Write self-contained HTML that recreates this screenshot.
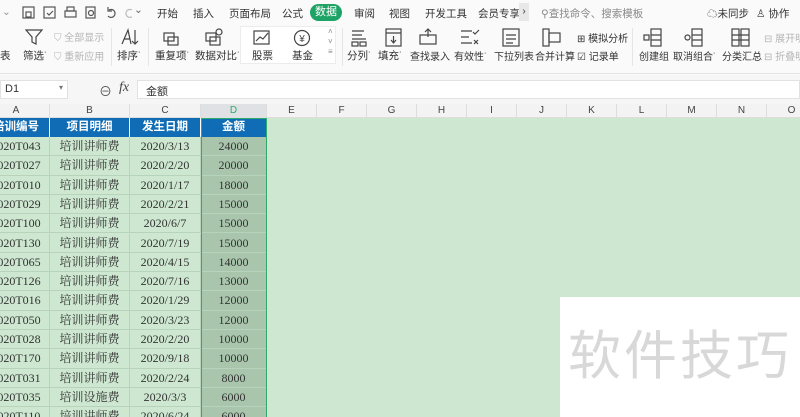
<!DOCTYPE html>
<html style="overflow:hidden;height:417px"><head><meta charset="utf-8"><style>
*{margin:0;padding:0;box-sizing:border-box}
html,body{width:800px;height:417px;overflow:hidden}
body{background:#fff;font-family:"Liberation Sans","Noto Sans CJK SC",sans-serif;color:#333}
#root{position:relative;width:800px;height:417px;overflow:hidden}
.a{position:absolute;white-space:nowrap}
.t{font-size:10.5px;color:#333}
.g{color:#b5b5b5}
.ic{position:absolute}
.ic svg{display:block}
.cell{position:absolute;font-size:12px;text-align:center;font-family:"Liberation Serif","Noto Serif CJK SC",serif;color:#333}
</style></head><body><div id="root">
<div class="a" style="left:0;top:0;width:800px;height:75px;background:#fafafa"></div>
<div class="a" style="left:0;top:73px;width:800px;height:1px;background:#e4e4e4"></div>
<div class="a t" style="left:2px;top:6px;color:#999">⌄</div>
<div class="ic" style="left:22px;top:6px"><svg width="110" height="14" fill="none" stroke="#555" stroke-width="1.2"><rect x="1" y="1" width="11" height="11"/><rect x="4" y="6" width="5" height="5"/><rect x="22" y="1" width="11" height="11"/><path d="M25 7l2 2 4-4"/><rect x="43" y="5" width="11" height="6"/><rect x="45" y="1" width="7" height="4"/><rect x="64" y="1" width="9" height="11"/><circle cx="69" cy="7" r="2.5"/><path d="M87 4a4 4 0 1 1-1 6M86 1v4h4"/><path stroke="#bbb" d="M110 4a4 4 0 1 0 1 6"/></svg></div>
<div class="a t" style="left:134px;top:4px;color:#666">⌄</div>
<div class="a t" style="left:157px;top:6px">开始</div>
<div class="a t" style="left:193px;top:6px">插入</div>
<div class="a t" style="left:229px;top:6px">页面布局</div>
<div class="a t" style="left:282px;top:6px">公式</div>
<div class="a" style="left:310px;top:4px;width:32px;height:17px;border-radius:9px;background:#1ea366;color:#fff;font-size:11px;text-align:center;line-height:17px">数据</div>
<div class="a t" style="left:354px;top:6px">审阅</div>
<div class="a t" style="left:389px;top:6px">视图</div>
<div class="a t" style="left:425px;top:6px">开发工具</div>
<div class="a t" style="left:478px;top:6px">会员专享</div>
<div class="a" style="left:519px;top:3px;width:10px;height:18px;background:#e8e8e8;font-size:10px;text-align:center;line-height:18px">›</div>
<div class="a t" style="left:541px;top:6px;color:#888">⚲查找命令、搜索模板</div>
<div class="a t" style="left:707px;top:6px">☁未同步</div>
<div class="a t" style="left:756px;top:6px">♙ 协作</div>
<div class="a t" style="left:0;top:48px">表</div>
<div class="ic" style="left:25px;top:28px"><svg width="18" height="18" fill="none" stroke="#444" stroke-width="1.2"><path d="M1 2h16l-6 7v7l-4-2V9z"/></svg></div>
<div class="a t" style="left:23px;top:48px">筛选˙</div>
<div class="a t g" style="left:54px;top:29px;font-size:10px">⛉ 全部显示</div>
<div class="a t g" style="left:54px;top:48px;font-size:10px">⛉ 重新应用</div>
<div class="a" style="left:111px;top:28px;width:1px;height:38px;background:#e5e5e5"></div>
<div class="ic" style="left:120px;top:28px"><svg width="20" height="18" fill="none" stroke="#444" stroke-width="1.2"><path d="M2 16L8 2l3 14M4 11h6M15 2v14M12 13l3 3 3-3"/></svg></div>
<div class="a t" style="left:117px;top:48px">排序˙</div>
<div class="a" style="left:148px;top:28px;width:1px;height:38px;background:#e5e5e5"></div>
<div class="ic" style="left:162px;top:28px"><svg width="20" height="18" fill="none" stroke="#444" stroke-width="1.2"><rect x="2" y="5" width="10" height="8"/><rect x="6" y="9" width="10" height="8"/></svg></div>
<div class="a t" style="left:155px;top:48px">重复项˙</div>
<div class="ic" style="left:204px;top:28px"><svg width="20" height="18" fill="none" stroke="#444" stroke-width="1.2"><rect x="2" y="5" width="10" height="8"/><rect x="6" y="9" width="10" height="8"/><circle cx="15" cy="4" r="3"/></svg></div>
<div class="a t" style="left:195px;top:48px">数据对比˙</div>
<div class="a" style="left:240px;top:26px;width:96px;height:38px;border:1px solid #ececec;background:#fff"></div>
<div class="ic" style="left:253px;top:30px"><svg width="18" height="16" fill="none" stroke="#444" stroke-width="1.2"><rect x="1" y="1" width="15" height="13"/><path d="M3 11l4-4 3 2 5-6"/></svg></div>
<div class="a t" style="left:252px;top:48px">股票</div>
<div class="ic" style="left:293px;top:29px"><svg width="18" height="18" fill="none" stroke="#444" stroke-width="1.2"><circle cx="9" cy="9" r="7.5"/><text x="9" y="13" font-size="10" text-anchor="middle" fill="#444" stroke="none">¥</text></svg></div>
<div class="a t" style="left:292px;top:48px">基金</div>
<div class="a" style="left:328px;top:27px;font-size:8px;color:#888;line-height:10px">˄<br>˅<br>≡</div>
<div class="a" style="left:342px;top:28px;width:1px;height:38px;background:#e5e5e5"></div>
<div class="ic" style="left:350px;top:29px"><svg width="20" height="18" fill="none" stroke="#444" stroke-width="1.2"><path d="M2 2h12M2 6h10M2 10h14"/><rect x="2" y="13" width="6" height="4"/><rect x="10" y="13" width="6" height="4"/></svg></div>
<div class="a t" style="left:347px;top:48px">分列˙</div>
<div class="ic" style="left:384px;top:28px"><svg width="20" height="20" fill="none" stroke="#444" stroke-width="1.2"><rect x="2" y="1" width="15" height="17"/><path d="M2 5h15M9.5 8v7M7 12l2.5 3 2.5-3"/></svg></div>
<div class="a t" style="left:378px;top:48px">填充˙</div>
<div class="ic" style="left:418px;top:28px"><svg width="20" height="18" fill="none" stroke="#444" stroke-width="1.2"><rect x="2" y="7" width="16" height="9"/><path d="M10 1v8M7 4l3-3 3 3"/></svg></div>
<div class="a t" style="left:410px;top:48px;font-size:10px">查找录入</div>
<div class="ic" style="left:460px;top:29px"><svg width="20" height="18" fill="none" stroke="#444" stroke-width="1.2"><path d="M1 2h11M1 8h8M1 14h11M13 3l2 2 4-4M14 11l4 4M18 11l-4 4"/></svg></div>
<div class="a t" style="left:454px;top:48px;font-size:10px">有效性˙</div>
<div class="ic" style="left:502px;top:28px"><svg width="18" height="20" fill="none" stroke="#444" stroke-width="1.2"><rect x="1" y="1" width="16" height="17"/><path d="M4 7h10M4 11h10M4 15h7"/></svg></div>
<div class="a t" style="left:494px;top:48px;font-size:10px">下拉列表</div>
<div class="ic" style="left:542px;top:28px"><svg width="20" height="20" fill="none" stroke="#444" stroke-width="1.2"><rect x="1" y="1" width="6" height="17"/><rect x="7" y="5" width="11" height="9"/></svg></div>
<div class="a t" style="left:535px;top:48px;font-size:10px">合并计算</div>
<div class="a t" style="left:577px;top:30px;font-size:10px">⊞ 模拟分析</div>
<div class="a t" style="left:577px;top:48px;font-size:10px">☑ 记录单</div>
<div class="a" style="left:632px;top:28px;width:1px;height:38px;background:#e5e5e5"></div>
<div class="ic" style="left:643px;top:28px"><svg width="20" height="20" fill="none" stroke="#444" stroke-width="1.2"><rect x="1" y="7" width="5" height="5"/><rect x="8" y="1" width="10" height="17"/><path d="M8 7h10M8 12h10"/></svg></div>
<div class="a t" style="left:639px;top:48px;font-size:10px">创建组</div>
<div class="ic" style="left:684px;top:28px"><svg width="20" height="20" fill="none" stroke="#444" stroke-width="1.2"><circle cx="3.5" cy="9.5" r="2.5"/><rect x="8" y="1" width="10" height="17"/><path d="M8 7h10M8 12h10"/></svg></div>
<div class="a t" style="left:673px;top:48px;font-size:10px">取消组合˙</div>
<div class="ic" style="left:731px;top:28px"><svg width="20" height="20" fill="none" stroke="#444" stroke-width="1.2"><rect x="1" y="1" width="7" height="17"/><rect x="10" y="1" width="8" height="17"/><path d="M1 7h17M1 12h17"/></svg></div>
<div class="a t" style="left:722px;top:48px;font-size:10px">分类汇总</div>
<div class="a t g" style="left:764px;top:30px;font-size:10px">⊟ 展开明</div>
<div class="a t g" style="left:764px;top:48px;font-size:10px">⊟ 折叠明</div>
<div class="a" style="left:0;top:75px;width:800px;height:29px;background:#f6f6f6"></div>
<div class="a" style="left:0;top:80px;width:68px;height:19px;background:#fff;border:1px solid #e2e2e2;font-size:11px;padding:2px 4px">D1<span style="position:absolute;right:4px;top:2px;color:#777;font-size:8px">▾</span></div>
<div class="a" style="left:99px;top:81px;font-size:13px;color:#555">⊖</div>
<div class="a" style="left:119px;top:80px;font-size:14px;font-style:italic;font-family:'Liberation Serif',serif;color:#444">fx</div>
<div class="a" style="left:137px;top:80px;width:663px;height:19px;background:#fff;border:1px solid #e2e2e2;font-size:11px;padding:2px 8px">金额</div>
<div class="a" style="left:0;top:104px;width:800px;height:14px;background:#f3f3f3;border-bottom:1px solid #ddd"></div>
<div class="a" style="left:201px;top:104px;width:66px;height:14px;background:#dfe1e4"></div>
<div id="ch"></div>
<div class="a" style="left:0;top:118px;width:800px;height:299px;background:#cde7d0"></div>
<div class="a" style="left:0;top:118px;width:267px;height:19px;background:#0f6cb5"></div>
<div class="a" style="left:202px;top:137px;width:64px;height:280px;background:#a9c6ad"></div>
<div id="g"></div>
<div class="a" style="left:201px;top:118px;width:66px;height:310px;border:1px solid #2eaa6b"></div>
<div class="a" style="left:560px;top:297px;width:240px;height:120px;background:#fff"></div>
<div class="a" style="left:568px;top:322px;font-size:53px;color:#d8d8d8;letter-spacing:3px;font-family:'Noto Sans CJK SC',sans-serif;line-height:60px">软件技巧</div>
</div>
<script>
var ch=document.getElementById('ch'),g=document.getElementById('g'),h='';
var cols=[['A',-17,50],['B',50,130],['C',130,201],['D',201,267],['E',267,317],['F',317,367],['G',367,417],['H',417,467],['I',467,517],['J',517,567],['K',567,617],['L',617,667],['M',667,717],['N',717,767],['O',767,817]];
cols.forEach(function(c){h+='<div class="a" style="left:'+c[1]+'px;top:104px;width:'+(c[2]-c[1])+'px;height:14px;font-size:10px;text-align:center;line-height:14px;color:'+(c[0]=='D'?'#2eaa6b':'#444')+';border-right:1px solid #ddd">'+c[0]+'</div>';});
ch.innerHTML=h;h='';
var hd=[['培训编号',-17,50],['项目明细',50,130],['发生日期',130,201],['金额',201,267]];
hd.forEach(function(c){h+='<div class="a" style="left:'+c[1]+'px;top:118px;width:'+(c[2]-c[1])+'px;height:19px;line-height:19px;text-align:center;color:#fff;font-size:11.5px;font-weight:bold;border-right:1px solid #fff">'+c[0]+'</div>';});
var d=[['043','3/13','24000'],['027','2/20','20000'],['010','1/17','18000'],['029','2/21','15000'],['100','6/7','15000'],['130','7/19','15000'],['065','4/15','14000'],['126','7/16','13000'],['016','1/29','12000'],['050','3/23','12000'],['028','2/20','10000'],['170','9/18','10000'],['031','2/24','8000'],['035','3/3','6000'],['110','6/24','6000']];
d.forEach(function(r,i){var y=137+i*19.3;var it=i==13?'培训设施费':'培训讲师费';
[['2020T'+r[0],-17,50],[it,50,130],['2020/'+r[1],130,201],[r[2],201,267]].forEach(function(c){h+='<div class="cell" style="left:'+c[1]+'px;top:'+y+'px;width:'+(c[2]-c[1])+'px;height:19.3px;line-height:19px;border-right:1px solid #b8d3bb;border-bottom:1px solid #b8d3bb">'+c[0]+'</div>';});});
g.innerHTML=h;
</script>
</body></html>
